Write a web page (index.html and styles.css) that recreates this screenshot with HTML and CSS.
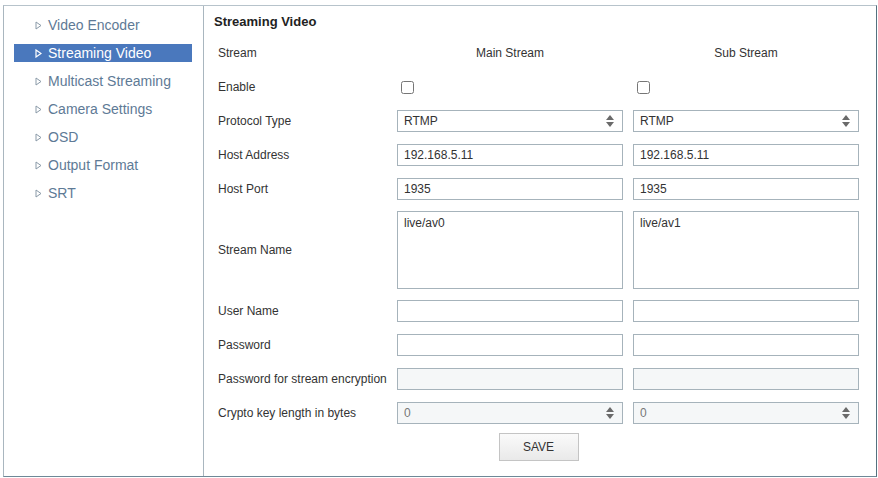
FILE: index.html
```html
<!DOCTYPE html>
<html>
<head>
<meta charset="utf-8">
<link rel="stylesheet" href="styles.css">
</head>
<body>
<div class="frame">
  <nav class="side">
    <ul class="menu">
      <li><a class="item"><svg class="tri" width="7" height="9" viewBox="0 0 7 9"><path d="M1 1 L6 4.5 L1 8 Z" fill="none" stroke="#8a9aa8" stroke-width="1"/></svg>Video Encoder</a></li>
      <li><a class="item active"><svg class="tri" width="7" height="9" viewBox="0 0 7 9"><path d="M1 1 L6 4.5 L1 8 Z" fill="none" stroke="#ffffff" stroke-width="1.2"/></svg>Streaming Video</a></li>
      <li><a class="item"><svg class="tri" width="7" height="9" viewBox="0 0 7 9"><path d="M1 1 L6 4.5 L1 8 Z" fill="none" stroke="#8a9aa8" stroke-width="1"/></svg>Multicast Streaming</a></li>
      <li><a class="item"><svg class="tri" width="7" height="9" viewBox="0 0 7 9"><path d="M1 1 L6 4.5 L1 8 Z" fill="none" stroke="#8a9aa8" stroke-width="1"/></svg>Camera Settings</a></li>
      <li><a class="item"><svg class="tri" width="7" height="9" viewBox="0 0 7 9"><path d="M1 1 L6 4.5 L1 8 Z" fill="none" stroke="#8a9aa8" stroke-width="1"/></svg>OSD</a></li>
      <li><a class="item"><svg class="tri" width="7" height="9" viewBox="0 0 7 9"><path d="M1 1 L6 4.5 L1 8 Z" fill="none" stroke="#8a9aa8" stroke-width="1"/></svg>Output Format</a></li>
      <li><a class="item"><svg class="tri" width="7" height="9" viewBox="0 0 7 9"><path d="M1 1 L6 4.5 L1 8 Z" fill="none" stroke="#8a9aa8" stroke-width="1"/></svg>SRT</a></li>
    </ul>
  </nav>
  <main class="main">
    <h1 class="title">Streaming Video</h1>
    <div class="form">
      <div class="lbl">Stream</div>
      <div class="head">Main Stream</div>
      <div class="head">Sub Stream</div>

      <div class="lbl">Enable</div>
      <div class="cell"><input type="checkbox" class="chk"></div>
      <div class="cell"><input type="checkbox" class="chk"></div>

      <div class="lbl">Protocol Type</div>
      <div class="cell"><div class="sel"><select class="field"><option>RTMP</option></select></div></div>
      <div class="cell"><div class="sel"><select class="field"><option>RTMP</option></select></div></div>

      <div class="lbl">Host Address</div>
      <div class="cell"><input class="field" type="text" value="192.168.5.11"></div>
      <div class="cell"><input class="field" type="text" value="192.168.5.11"></div>

      <div class="lbl">Host Port</div>
      <div class="cell"><input class="field" type="text" value="1935"></div>
      <div class="cell"><input class="field" type="text" value="1935"></div>

      <div class="lbl">Stream Name</div>
      <div class="cell top"><textarea class="area">live/av0</textarea></div>
      <div class="cell top"><textarea class="area">live/av1</textarea></div>

      <div class="lbl">User Name</div>
      <div class="cell"><input class="field" type="text"></div>
      <div class="cell"><input class="field" type="text"></div>

      <div class="lbl">Password</div>
      <div class="cell"><input class="field" type="password"></div>
      <div class="cell"><input class="field" type="password"></div>

      <div class="lbl">Password for stream encryption</div>
      <div class="cell"><input class="field dis" type="text"></div>
      <div class="cell"><input class="field dis" type="text"></div>

      <div class="lbl">Crypto key length in bytes</div>
      <div class="cell"><div class="sel"><select class="field dis grey"><option>0</option></select></div></div>
      <div class="cell"><div class="sel"><select class="field dis grey"><option>0</option></select></div></div>

      <div class="actions"><button class="save">SAVE</button></div>
    </div>
  </main>
</div>
</body>
</html>
```

FILE: styles.css
```css
html, body {
  margin: 0;
  padding: 0;
  background: #ffffff;
}
body {
  font-family: "Liberation Sans", Arial, sans-serif;
  color: #333333;
}
.frame {
  margin: 5px 0 0 3px;
  width: 874px;
  height: 472px;
  box-sizing: border-box;
  border-top: 1px solid #b7c3cb;
  border-left: 1px solid #a9b6bf;
  border-right: 1px solid #54717f;
  border-bottom: 1px solid #6e8897;
  display: flex;
}
.side {
  width: 199px;
  flex: none;
  border-right: 1px solid #a9b6bf;
}
.menu {
  list-style: none;
  margin: 0;
  padding: 5px 0 0 10px;
}
.menu li {
  height: 28px;
  display: flex;
  align-items: center;
}
.item {
  display: flex;
  align-items: center;
  width: 178px;
  height: 18px;
  font-size: 14px;
  color: #5e7a96;
  box-sizing: border-box;
  padding-left: 21px;
}
.item .tri {
  margin-right: 6px;
}
.item.active {
  background: #4a78bd;
  color: #ffffff;
}
.main {
  flex: 1;
  padding: 0 0 0 10px;
}
.title {
  margin: 0;
  font-size: 13px;
  font-weight: bold;
  color: #222222;
  height: 30px;
  line-height: 31px;
}
.form {
  margin-left: 4px;
  display: grid;
  grid-template-columns: 169px 226px 226px;
  grid-template-rows: 34px 34px 34px 34px 34px 88px 34px 34px 34px 34px 34px;
  column-gap: 10px;
  align-items: center;
  font-size: 12px;
}
.lbl {
  color: #333333;
  white-space: nowrap;
}
.head {
  text-align: center;
  color: #333333;
}
.cell {
  display: flex;
  align-items: center;
}
.cell.top {
  align-self: start;
  padding-top: 5px;
}
.chk {
  width: 13px;
  height: 13px;
  margin: 0 0 0 4px;
}
.field {
  width: 226px;
  height: 22px;
  box-sizing: border-box;
  border: 1px solid #a6b3bb;
  border-radius: 0;
  background: #ffffff;
  padding: 0 6px;
  font-family: "Liberation Sans", Arial, sans-serif;
  font-size: 12px;
  color: #333333;
  outline: none;
  margin: 0;
}
select.field {
  -webkit-appearance: none;
  appearance: none;
}
.dis {
  background: #f5f7f8;
}
.grey {
  color: #777777;
}
.sel {
  position: relative;
  width: 226px;
  height: 22px;
}
.sel::before,
.sel::after {
  content: "";
  position: absolute;
  right: 9px;
  width: 0;
  height: 0;
  border-left: 4px solid transparent;
  border-right: 4px solid transparent;
  pointer-events: none;
}
.sel::before {
  top: 5px;
  border-bottom: 5px solid #6a6a6a;
}
.sel::after {
  top: 12px;
  border-top: 5px solid #6a6a6a;
}
.area {
  width: 226px;
  height: 78px;
  box-sizing: border-box;
  border: 1px solid #a6b3bb;
  padding: 4px 6px;
  font-family: "Liberation Sans", Arial, sans-serif;
  font-size: 12px;
  color: #333333;
  resize: none;
  outline: none;
  margin: 0;
  display: block;
}
.actions {
  grid-column: 1 / 4;
  display: flex;
  justify-content: center;
  align-items: flex-start;
  height: 34px;
  padding-top: 3px;
  box-sizing: border-box;
  align-self: start;
}
.save {
  width: 80px;
  height: 28px;
  border: 1px solid #c4c4c4;
  background: linear-gradient(#fafafa, #e9e9e9);
  font-family: "Liberation Sans", Arial, sans-serif;
  font-size: 12px;
  color: #333333;
  padding: 0;
}
```
